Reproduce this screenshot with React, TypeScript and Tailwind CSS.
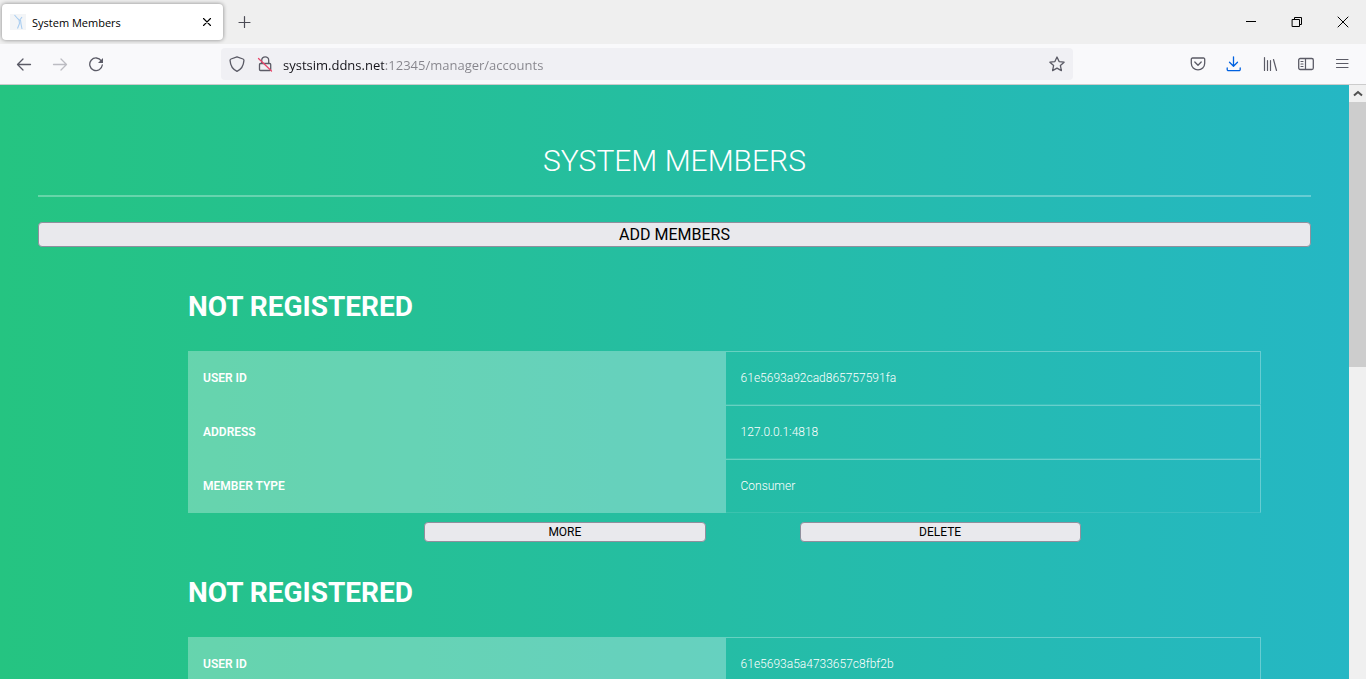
import React from "react";

const members = [
  { id: "61e5693a92cad865757591fa", address: "127.0.0.1:4818", type: "Consumer" },
  { id: "61e5693a5a4733657c8fbf2b", address: "127.0.0.1:4819", type: "Consumer" },
];

const line = { fill: "none", stroke: "currentColor", strokeWidth: 1.3, strokeLinecap: "round", strokeLinejoin: "round" } as const;

function Icon({ children }: { children: React.ReactNode }) {
  return (
    <svg className="size-4 shrink-0" viewBox="0 0 16 16" aria-hidden="true" {...line}>
      {children}
    </svg>
  );
}

function TabStrip() {
  return (
    <header className="flex h-11 shrink-0 items-center bg-[#efefef] pl-0.5">
      <div className="flex h-9 w-[221px] items-center rounded bg-white px-2 shadow-[0_0_4px_rgba(0,0,0,0.45)]">
        <svg className="size-4 shrink-0" viewBox="0 0 16 16" aria-hidden="true">
          <rect width="16" height="16" fill="#f3f5f7" />
          <path d="M4.500 1l3 3.500 2 2 2.500-3.500M9 5.500l.5 4-2 5M10.500 6l.5 4 1 5" fill="none" stroke="#a9cdf0" strokeWidth="1.1" />
        </svg>
        <span className="ml-1.5 flex-1 pt-0.5 text-[11px] text-black">System Members</span>
        <button aria-label="Close tab" className="flex size-4 items-center justify-center text-black">
          <Icon><path d="M4.500 4.500l7 7M11.500 4.500l-7 7" strokeWidth="1.1" /></Icon>
        </button>
      </div>
      <button aria-label="New tab" className="ml-3 flex size-5 items-center justify-center text-[#4b4b55]">
        <Icon><path d="M7.500 2.500v11M2 8.500h11" strokeWidth="1.2" /></Icon>
      </button>
      <div className="ml-auto flex items-center gap-[30px] pr-[15px] text-black">
        <button aria-label="Minimize"><Icon><path d="M3 7.500h10" strokeWidth="1" strokeLinecap="butt" /></Icon></button>
        <button aria-label="Restore">
          <Icon><path d="M3.500 5.500h7v7h-7zM5.500 5v-1.500h7v7h-1.500" strokeWidth="1" strokeLinejoin="miter" /></Icon>
        </button>
        <button aria-label="Close window"><Icon><path d="M3 3l10 10M13 3l-10 10" strokeWidth="1" /></Icon></button>
      </div>
    </header>
  );
}

function Toolbar() {
  return (
    <nav aria-label="Browser toolbar" className="flex h-[41px] shrink-0 items-center border-b border-[#cccccc] bg-[#f9f9fb] px-4 text-[#5b5b66]">
      <div className="flex w-[205px] shrink-0 items-center gap-5">
        <button aria-label="Back"><Icon><path d="M14.500 8.500H1.500M7 3L1.500 8.500 7 14" /></Icon></button>
        <button aria-label="Forward" className="text-[#bcbcc2]"><Icon><path d="M1.500 8.500h13M9 3l5.500 5.500L9 14" /></Icon></button>
        <button aria-label="Reload">
          <Icon>
            <path d="M13.300 4.800A6.300 6.300 0 1 0 14.300 9" />
            <path d="M15 2v5h-5z" fill="currentColor" stroke="none" />
          </Icon>
        </button>
      </div>
      <div className="flex h-8 w-[852px] min-w-0 items-center rounded bg-[#f0f0f4] px-2">
        <Icon><path d="M8 .8l6 2.200c.8.300 1 .8.900 1.600-.3 5-2.300 8.500-6.900 10.700C3.400 13.100 1.400 9.600 1.100 4.600 1 3.800 1.200 3.300 2 3z" /></Icon>
        <svg className="ml-3 size-4 shrink-0" viewBox="0 0 16 16" aria-hidden="true" {...line}>
          <path d="M4.700 7.500V4.300a3.500 3.500 0 0 1 7 0v3.200M3.500 7.500h9.200a1 1 0 0 1 1 1v5a1 1 0 0 1-1 1H3.500a1 1 0 0 1-1-1v-5a1 1 0 0 1 1-1z" />
          <path d="M1.500 2.500l13 12.500" stroke="#e9476c" />
        </svg>
        <label htmlFor="address" className="ml-2.5 flex flex-1" aria-label="Address">
          <input
            id="address"
            aria-label="Address"
            className="h-6 w-full bg-linear-to-r from-[#15141a] from-[101px] to-[#85848b] to-[101px] bg-clip-text pt-0.5 text-[13px] text-transparent caret-[#15141a] outline-none"
            defaultValue="systsim.ddns.net:12345/manager/accounts"
          />
        </label>
        <button aria-label="Bookmark this page">
          <Icon><path d="M8 1l2.100 4.600 5 .6-3.700 3.400 1 5L8 12.100 3.600 14.600l1-5L.9 6.200l5-.6z" /></Icon>
        </button>
      </div>
      <div className="ml-auto flex items-center gap-5">
        <button aria-label="Save to Pocket">
          <Icon><path d="M2.500 2h11a1.200 1.200 0 0 1 1.200 1.200v4a6.700 6.700 0 0 1-13.400 0v-4A1.200 1.200 0 0 1 2.500 2zM4.800 6L8 9.200 11.200 6" /></Icon>
        </button>
        <button aria-label="Downloads" className="text-[#0061e0]">
          <Icon><path d="M7.500 .8v9M3.500 6.200l4 4 4-4M1.200 12v1.500a1.200 1.200 0 0 0 1.200 1.200h10.600a1.200 1.200 0 0 0 1.200-1.200V12" /></Icon>
        </button>
        <button aria-label="Library">
          <Icon><path d="M2.500 1.500v13M5.500 4.500v10M8.500 4.500v10M11.500 3.500l3 11" strokeWidth="1.2" /></Icon>
        </button>
        <button aria-label="Sidebars">
          <Icon>
            <rect x=".7" y="2.500" width="14.600" height="11" rx="1.500" />
            <path d="M7.500 2.500v11M3 5.500h2M3 8h2M3 10.500h2" strokeWidth="1.200" />
          </Icon>
        </button>
        <button aria-label="Application menu"><Icon><path d="M2.500 3.500h11.500M2.500 7.500h11.500M2.500 11.500h11.500" strokeWidth="1.200" /></Icon></button>
      </div>
    </nav>
  );
}

const pageButton = "rounded border border-[#8f8f9d] bg-[#e9e9ed] text-black uppercase";

function Member({ id, address, type }: { id: string; address: string; type: string }) {
  const rows = [
    ["User ID", id],
    ["Address", address],
    ["Member type", type],
  ];
  return (
    <article className="mb-[35px] pl-[150px]">
      <h2 className="mb-7 text-[28px] leading-8 font-bold text-white uppercase">Not registered</h2>
      <div className="pr-[50px]">
        <table className="w-full table-fixed border-separate border-spacing-0 text-xs text-white">
          <tbody>
            {rows.map(([label, value]) => (
              <tr key={label} className="h-[54px]">
                <th scope="row" className="w-[50.1%] bg-white/30 px-[15px] text-left font-semibold uppercase">{label}</th>
                <td className="border-t border-r border-b border-t-white/30 border-r-white/30 border-b-white/10 px-[15px] font-light">{value}</td>
              </tr>
            ))}
          </tbody>
        </table>
      </div>
      <div className="mt-[9px] flex justify-center gap-[94px] pl-1.5">
        <button className={pageButton + " h-5 w-[calc(25%+2px)] text-xs"}>More</button>
        <button className={pageButton + " h-5 w-[calc(25%+2px)] text-xs"}>Delete</button>
      </div>
    </article>
  );
}

export default function App() {
  return (
    <div className="flex h-screen flex-col overflow-hidden font-['Open_Sans','Noto_Sans',sans-serif]">
      <TabStrip />
      <Toolbar />
      <div className="flex min-h-0 flex-1">
        <main className="flex-1 overflow-y-auto bg-linear-to-r/srgb from-[#25c481] to-[#25b7c4] px-[38px] pt-14 font-['Roboto',sans-serif] [scrollbar-width:none]">
          <h1 className="border-b-2 border-white/30 pb-3.5 text-center text-[30px] leading-10 font-light text-white uppercase">System Members</h1>
          <button className={pageButton + " mt-[25px] mb-11 block h-[25px] w-full text-base leading-4"}>Add members</button>
          {members.map((m) => (
            <Member key={m.id} {...m} />
          ))}
        </main>
        <div className="flex w-[17px] shrink-0 flex-col bg-[#f0f0f0]" aria-hidden="true">
          <div className="flex h-[17px] items-center justify-center text-[#505050]">
            <svg className="h-2 w-3" viewBox="0 0 12 8" fill="none" stroke="currentColor" strokeWidth="2"><path d="M2 5.500L6 2 10 5.500" /></svg>
          </div>
          <div className="h-[265px] bg-[#cdcdcd]" />
        </div>
      </div>
    </div>
  );
}
